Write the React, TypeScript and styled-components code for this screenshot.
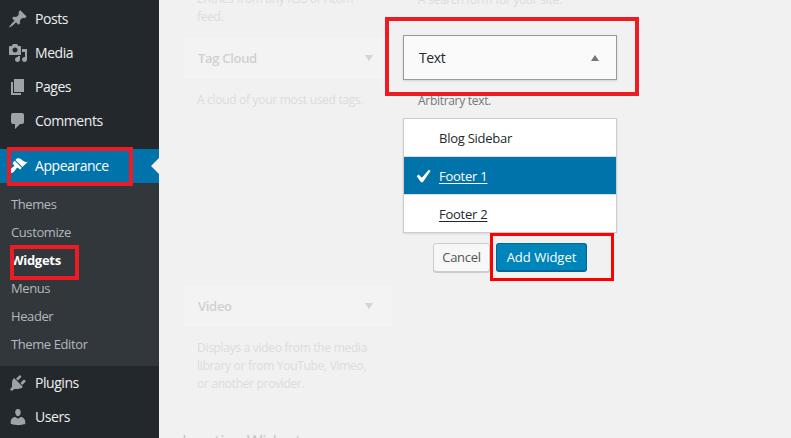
import React from "react";
import styled, { createGlobalStyle } from "styled-components";

const Global = createGlobalStyle`
  html, body { margin: 0; padding: 0; background: #f1f1f1; }
  body { font-family: "Open Sans", "Noto Sans", sans-serif; font-size: 13px; }
`;

const Page = styled.div`
  position: relative;
  display: flex;
  width: 791px;
  height: 438px;
  overflow: hidden;
  background: #f1f1f1;
`;

const Sidebar = styled.nav`
  flex: 0 0 159px;
  padding-top: 2px;
  background: #23282d;
`;

const MenuRow = styled.div<{ $active?: boolean }>`
  position: relative;
  display: flex;
  align-items: center;
  height: 34px;
  gap: 7px;
  padding-left: 8px;
  font-size: 14px;
  letter-spacing: -0.45px;
  color: ${(p) => (p.$active ? "#fff" : "#eee")};
  background: ${(p) => (p.$active ? "#0073aa" : "transparent")};
  margin-top: ${(p) => (p.$active ? "11px" : "0")};
  svg { fill: ${(p) => (p.$active ? "#fff" : "#9ea3a8")}; flex: none; margin-top: -1px; }
`;

const MenuLabel = styled.span`
  margin-bottom: 2px;
`;

const ActiveNotch = styled.span`
  position: absolute;
  right: 0;
  top: 9px;
  border: 8px solid transparent;
  border-left-width: 0;
  border-right-color: #f1f1f1;
`;

const SubMenu = styled.div`
  padding: 7px 0 8px;
  background: #32373c;
`;

const SubRow = styled.div<{ $current?: boolean }>`
  height: 28px;
  line-height: 28px;
  padding-left: 11px;
  font-size: 13px;
  letter-spacing: ${(p) => (p.$current ? "-0.3px" : "-0.4px")};
  color: ${(p) => (p.$current ? "#fff" : "#b4b9be")};
  font-weight: ${(p) => (p.$current ? 700 : 400)};
`;

const Main = styled.main`
  display: flex;
  align-items: flex-start;
  gap: 9px;
  padding-left: 23px;
`;

const LeftColumn = styled.div`
  width: 212px;
  margin-top: -10px;
`;

const RightColumn = styled.div`
  width: 214px;
  margin-top: -9px;
`;

const FadedDesc = styled.p`
  margin: 0;
  padding: 0 20px 0 15px;
  font-size: 12px;
  line-height: 18px;
  letter-spacing: -0.3px;
  color: #dcdcdc;
`;

const TagDesc = styled(FadedDesc)`
  margin-top: 11px;
`;

const FadedCard = styled.div<{ $top: number }>`
  display: flex;
  align-items: center;
  justify-content: space-between;
  box-sizing: border-box;
  height: 44px;
  margin-top: ${(p) => p.$top}px;
  padding: 0 20px 0 15px;
  background: #f3f3f3;
  border: 1px solid #f0f0f0;
  font-size: 13px;
  font-weight: 600;
  letter-spacing: -0.3px;
  color: #d0d0d0;
`;

const FadedArrow = styled.span`
  border-left: 4px solid transparent;
  border-right: 4px solid transparent;
  border-top: 6px solid #d4d4d4;
`;

const InactiveHeading = styled.h2`
  margin: 36px 0 0;
  font-size: 17px;
  font-weight: 400;
  line-height: 24px;
  letter-spacing: -0.1px;
  color: #c4c4c4;
  white-space: nowrap;
`;

const TextCard = styled.div`
  display: flex;
  align-items: center;
  justify-content: space-between;
  box-sizing: border-box;
  height: 45px;
  margin-top: 26px;
  padding: 0 17px 0 15px;
  background: #fafafa;
  border: 1px solid #999;
  box-shadow: 0 1px 2px rgba(0, 0, 0, 0.12);
  font-size: 14px;
  letter-spacing: -0.4px;
  color: #23282d;
`;

const UpArrow = styled.span`
  border-left: 4px solid transparent;
  border-right: 4px solid transparent;
  border-bottom: 6px solid #72777c;
`;

const Description = styled.p`
  margin: 12px 0 8px;
  padding-left: 15px;
  font-size: 12px;
  line-height: 18px;
  letter-spacing: -0.3px;
  color: #72777c;
`;

const Chooser = styled.ul`
  margin: 0;
  padding: 0;
  list-style: none;
  background: #fff;
  border: 1px solid #ccc;
  box-shadow: 0 1px 2px rgba(0, 0, 0, 0.1);
`;

const ChooserItem = styled.li<{ $selected?: boolean }>`
  position: relative;
  box-sizing: border-box;
  height: 37px;
  line-height: 38px;
  padding-left: 35px;
  font-size: 13px;
  letter-spacing: -0.25px;
  color: ${(p) => (p.$selected ? "#fff" : "#23282d")};
  background: ${(p) => (p.$selected ? "#0073aa" : "#fff")};
  & + & { height: 38px; border-top: 1px solid #ddd; }
  svg { position: absolute; left: 9px; top: 9px; fill: #fff; }
`;

const Underlined = styled.span`
  text-decoration: underline;
  text-underline-offset: 2px;
`;

const Actions = styled.div`
  display: flex;
  justify-content: flex-end;
  gap: 6px;
  margin: 10px 30px 0 0;
`;

const CancelButton = styled.button`
  box-sizing: border-box;
  width: 57px;
  height: 29px;
  padding: 0 0 1px;
  font: 13px "Open Sans", sans-serif;
  letter-spacing: -0.3px;
  color: #555;
  background: #f7f7f7;
  border: 1px solid #ccc;
  border-radius: 3px;
  box-shadow: 0 1px 0 #ccc;
`;

const PrimaryButton = styled.button`
  box-sizing: border-box;
  width: 91px;
  height: 29px;
  padding: 0 0 1px;
  font: 13px "Open Sans", sans-serif;
  color: #fff;
  background: #0085ba;
  border: 1px solid #006799;
  border-bottom-width: 2px;
  border-radius: 3px;
`;

const Annotation = styled.div<{ $x: number; $y: number; $w: number; $h: number; $c?: string; $t?: number }>`
  position: absolute;
  box-sizing: border-box;
  left: ${(p) => p.$x}px;
  top: ${(p) => p.$y}px;
  width: ${(p) => p.$w}px;
  height: ${(p) => p.$h}px;
  border: ${(p) => p.$t ?? 4}px solid ${(p) => p.$c ?? "#ed1c24"};
  pointer-events: none;
`;

const Icon = ({ d }: { d: string }) => (
  <svg width="20" height="20" viewBox="0 0 20 20" aria-hidden="true">
    <path d={d} />
  </svg>
);

const icons = {
  posts: "M10.44 3.02l1.82-1.82 6.36 6.35-1.83 1.82c-1.05-.68-2.48-.57-3.41.36l-.75.75c-.92.93-1.04 2.35-.35 3.41l-1.83 1.82-2.41-2.41-2.8 2.79c-.42.42-3.38 2.71-3.8 2.29s1.86-3.39 2.28-3.81l2.79-2.79L4.1 9.36l1.83-1.82c1.05.69 2.48.57 3.4-.36l.75-.75c.93-.92 1.05-2.35.36-3.41z",
  media: "M13 11V4c0-.55-.45-1-1-1h-1.67L9 1H5L3.67 3H2c-.55 0-1 .45-1 1v7c0 .55.45 1 1 1h10c.55 0 1-.45 1-1zM7 4.5c1.38 0 2.5 1.12 2.5 2.5S8.38 9.5 7 9.5 4.5 8.38 4.5 7 5.62 4.5 7 4.5zM14 6h5v10.5c0 1.38-1.12 2.5-2.5 2.5S14 17.88 14 16.5s1.12-2.5 2.5-2.5c.17 0 .34.02.5.05V9h-3V6zm-4 8.05V13h2v3.5c0 1.38-1.12 2.5-2.5 2.5S7 17.88 7 16.5 8.12 14 9.5 14c.17 0 .34.02.5.05z",
  pages: "M6 15V2h10v13H6zm-1 1h8v2H3V5h2v11z",
  comments: "M5 2h9c1.1 0 2 .9 2 2v7c0 1.1-.9 2-2 2h-2l-5 5v-5H5c-1.1 0-2-.9-2-2V4c0-1.1.9-2 2-2z",
  appearance: "M14.48 11.06L7.41 3.99l1.5-1.5c.5-.56 2.3-.47 3.51.32 1.21.8 1.43 1.28 2.91 2.1 1.18.64 2.45 1.26 4.45.85zm-.71.71L6.7 4.7 4.93 6.47c-.39.39-.39 1.02 0 1.41l1.06 1.06c.39.39.39 1.03 0 1.42-.6.6-1.43 1.11-2.21 1.69-.35.26-.7.53-1.01.84C1.43 13.23.4 14.89 1.8 16.29c1.41 1.4 3.06.37 4.48-1.04.3-.31.58-.66.84-1.01.58-.78 1.09-1.61 1.69-2.21.39-.39 1.02-.39 1.41 0l1.06 1.06c.39.39 1.02.39 1.41 0z",
  plugins: "M13.11 4.36L9.87 7.6 8 5.73l3.24-3.24c.35-.34 1.05-.2 1.56.32.52.51.66 1.21.31 1.55zm-8 1.77l.91-1.12 9.01 9.01-1.19.84c-.71.71-2.63 1.16-3.82 1.16H6.14L4.9 17.26c-.59.59-1.54.59-2.12 0-.59-.58-.59-1.53 0-2.12l1.24-1.24v-3.88c0-1.13.4-3.19 1.09-3.89zm7.26 3.97l3.24-3.24c.34-.35 1.04-.21 1.55.31.52.51.66 1.21.31 1.55l-3.24 3.25z",
  users: "M10 9.25c-2.27 0-2.73-3.44-2.73-3.44C7 4.02 7.82 2 9.97 2c2.16 0 2.98 2.02 2.71 3.81 0 0-.41 3.44-2.68 3.44zm0 2.57L12.72 10c2.39 0 4.52 2.33 4.52 4.53v2.49s-3.65 1.13-7.24 1.13c-3.65 0-7.24-1.13-7.24-1.13v-2.49c0-2.25 1.94-4.48 4.47-4.48z",
  check: "M14.83 4.89l1.34.94-5.81 8.38H9.02L5.78 9.67l1.34-1.25 2.57 2.4z",
};

export default function App() {
  return (
    <Page>
      <Global />
      <Sidebar>
        <MenuRow><Icon d={icons.posts} /><MenuLabel>Posts</MenuLabel></MenuRow>
        <MenuRow><Icon d={icons.media} /><MenuLabel>Media</MenuLabel></MenuRow>
        <MenuRow><Icon d={icons.pages} /><MenuLabel>Pages</MenuLabel></MenuRow>
        <MenuRow><Icon d={icons.comments} /><MenuLabel>Comments</MenuLabel></MenuRow>
        <MenuRow $active><Icon d={icons.appearance} /><MenuLabel>Appearance</MenuLabel><ActiveNotch /></MenuRow>
        <SubMenu>
          <SubRow>Themes</SubRow>
          <SubRow>Customize</SubRow>
          <SubRow $current>Widgets</SubRow>
          <SubRow>Menus</SubRow>
          <SubRow>Header</SubRow>
          <SubRow>Theme Editor</SubRow>
        </SubMenu>
        <MenuRow><Icon d={icons.plugins} /><MenuLabel>Plugins</MenuLabel></MenuRow>
        <MenuRow><Icon d={icons.users} /><MenuLabel>Users</MenuLabel></MenuRow>
      </Sidebar>
      <Main>
        <LeftColumn>
          <FadedDesc>Entries from any RSS or Atom feed.</FadedDesc>
          <FadedCard $top={10}>Tag Cloud<FadedArrow /></FadedCard>
          <TagDesc>A cloud of your most used tags.</TagDesc>
          <FadedCard $top={175}>Video<FadedArrow /></FadedCard>
          <TagDesc>Displays a video from the media library or from YouTube, Vimeo, or another provider.</TagDesc>
          <InactiveHeading>Inactive Widgets</InactiveHeading>
        </LeftColumn>
        <RightColumn>
          <FadedDesc>A search form for your site.</FadedDesc>
          <TextCard>Text<UpArrow /></TextCard>
          <Description>Arbitrary text.</Description>
          <Chooser>
            <ChooserItem>Blog Sidebar</ChooserItem>
            <ChooserItem $selected>
              <svg width="20" height="20" viewBox="3 3 15 13" aria-hidden="true"><path d={icons.check} /></svg>
              <Underlined>Footer 1</Underlined>
            </ChooserItem>
            <ChooserItem><Underlined>Footer 2</Underlined></ChooserItem>
          </Chooser>
          <Actions>
            <CancelButton>Cancel</CancelButton>
            <PrimaryButton>Add Widget</PrimaryButton>
          </Actions>
        </RightColumn>
      </Main>
      <Annotation $x={7} $y={147} $w={126} $h={39} />
      <Annotation $x={10} $y={245} $w={69} $h={35} />
      <Annotation $x={385} $y={17} $w={254} $h={79} />
      <Annotation $x={490} $y={233} $w={124} $h={48} $c="#ff0000" $t={3} />
    </Page>
  );
}
